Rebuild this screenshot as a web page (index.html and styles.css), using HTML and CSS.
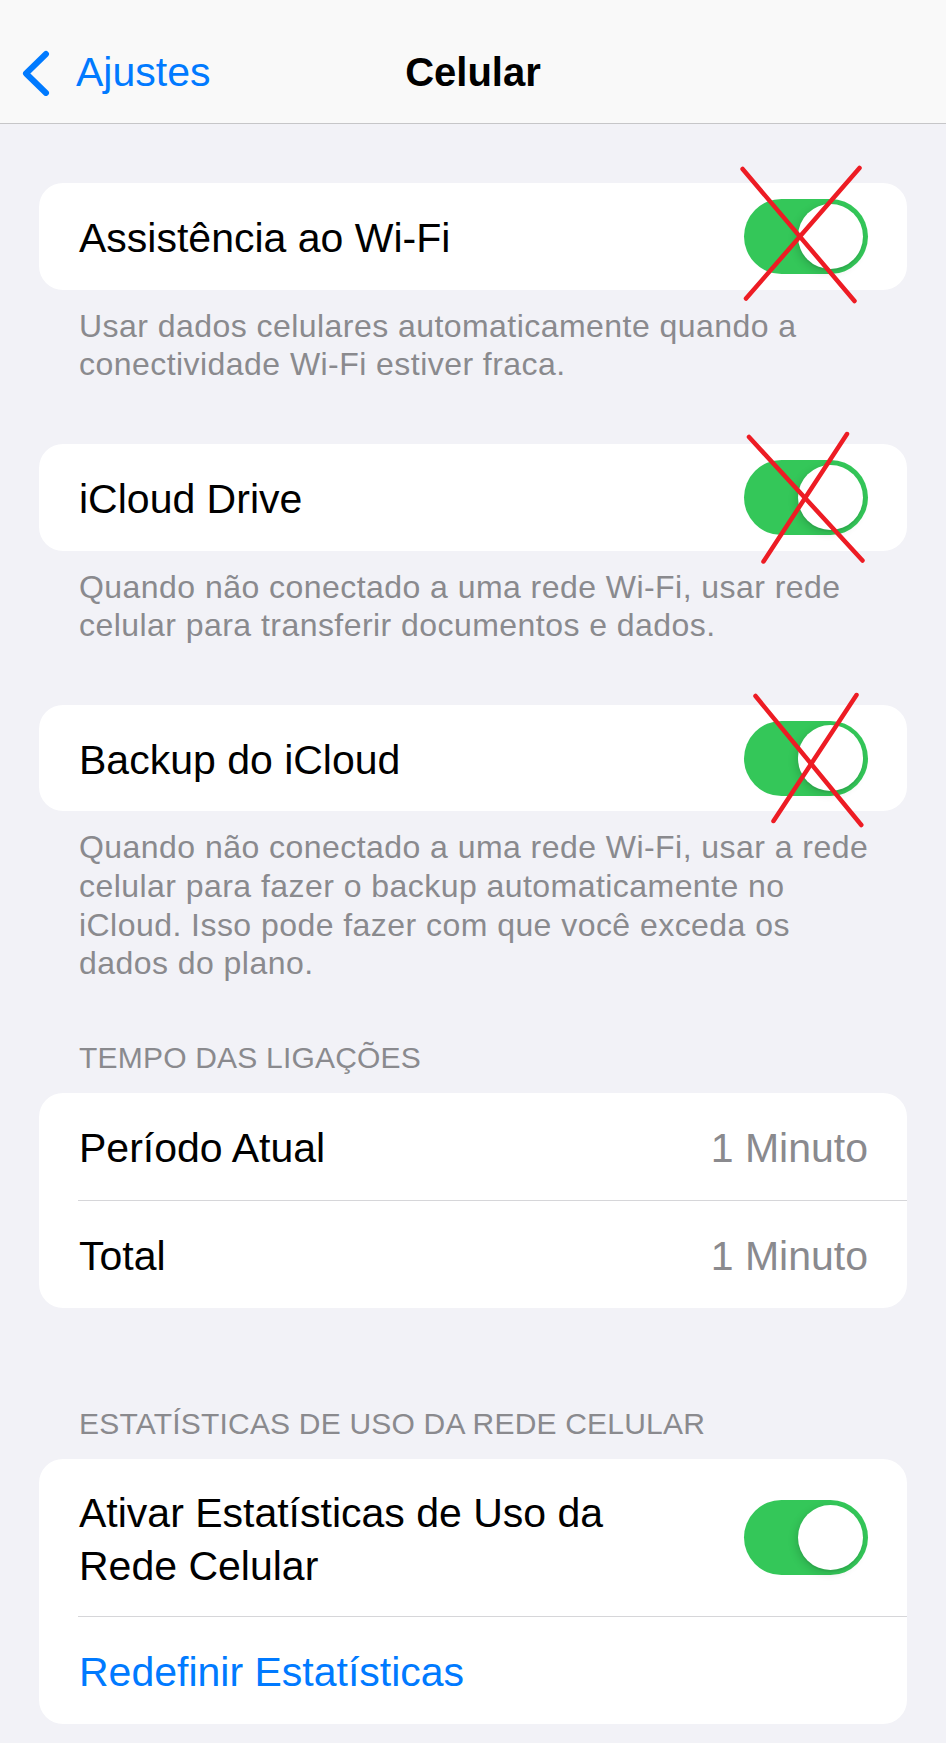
FILE: index.html
```html
<!DOCTYPE html>
<html lang="pt-BR">
<head>
<meta charset="utf-8">
<title>Celular</title>
<link rel="stylesheet" href="styles.css">
</head>
<body>
<header class="nav">
  <a class="back" href="#">
    <svg class="chev" width="30" height="46" viewBox="0 0 30 46"><polyline points="26,4 6,23.5 26,43" fill="none" stroke="#007aff" stroke-width="6" stroke-linecap="round" stroke-linejoin="round"/></svg>
    <span class="back-text">Ajustes</span>
  </a>
  <h1 class="title">Celular</h1>
  <div class="nav-right"></div>
</header>

<main class="content">
  <section class="group g1">
    <div class="card">
      <div class="row"><span class="label">Assistência ao Wi-Fi</span><span class="switch"><span class="knob"></span></span></div>
    </div>
    <p class="footnote">Usar dados celulares automaticamente quando a<br>conectividade Wi-Fi estiver fraca.</p>
  </section>

  <section class="group g2">
    <div class="card">
      <div class="row"><span class="label">iCloud Drive</span><span class="switch"><span class="knob"></span></span></div>
    </div>
    <p class="footnote">Quando não conectado a uma rede Wi-Fi, usar rede<br>celular para transferir documentos e dados.</p>
  </section>

  <section class="group g3">
    <div class="card">
      <div class="row"><span class="label">Backup do iCloud</span><span class="switch"><span class="knob"></span></span></div>
    </div>
    <p class="footnote">Quando não conectado a uma rede Wi-Fi, usar a rede<br>celular para fazer o backup automaticamente no<br>iCloud. Isso pode fazer com que você exceda os<br>dados do plano.</p>
  </section>

  <section class="group g4">
    <h2 class="header">TEMPO DAS LIGAÇÕES</h2>
    <div class="card">
      <div class="row"><span class="label">Período Atual</span><span class="value">1 Minuto</span></div>
      <div class="sep"></div>
      <div class="row"><span class="label">Total</span><span class="value">1 Minuto</span></div>
    </div>
  </section>

  <section class="group g5">
    <h2 class="header">ESTATÍSTICAS DE USO DA REDE CELULAR</h2>
    <div class="card">
      <div class="row tall"><span class="label multi">Ativar Estatísticas de Uso da Rede Celular</span><span class="switch"><span class="knob"></span></span></div>
      <div class="sep"></div>
      <div class="row"><span class="label link">Redefinir Estatísticas</span></div>
    </div>
  </section>
</main>

<svg class="marks" width="946" height="1743" viewBox="0 0 946 1743">
  <g stroke="#ed1c24" stroke-width="4.5" stroke-linecap="round" fill="none">
    <line x1="742.6" y1="169" x2="854.5" y2="301"/>
    <line x1="859.5" y1="168" x2="746" y2="298.5"/>
    <line x1="749" y1="437" x2="862.5" y2="560.5"/>
    <line x1="847" y1="434" x2="763.5" y2="561.5"/>
    <line x1="755.5" y1="696" x2="861.3" y2="825"/>
    <line x1="856.5" y1="695" x2="773.5" y2="821"/>
  </g>
</svg>
</body>
</html>
```

FILE: styles.css
```css
html, body {
  margin: 0;
  padding: 0;
}

body {
  position: relative;
  width: 946px;
  min-height: 1743px;
  background: #f2f2f7;
  font-family: "Liberation Sans", Arial, sans-serif;
  color: #000;
}

.nav {
  box-sizing: content-box;
  height: 77px;
  padding-top: 46px;
  border-bottom: 1px solid #c6c6c8;
  background: #f9f9f9;
  display: grid;
  grid-template-columns: 1fr auto 1fr;
  align-items: start;
}

.back {
  display: flex;
  align-items: center;
  height: 53px;
  padding-left: 20px;
  gap: 26px;
  text-decoration: none;
  color: #007aff;
  font-size: 41px;
  line-height: 53px;
}

.chev {
  display: block;
  flex: none;
}

.title {
  margin: 0;
  font-size: 40px;
  line-height: 53px;
  font-weight: bold;
  text-align: center;
}

.content {
  padding: 0 39px;
}

.group {
  margin: 0;
}

.g1 { padding-top: 59px; }
.g2 { padding-top: 60px; }
.g3 { padding-top: 60px; }
.g4 { padding-top: 57.4px; }
.g5 { padding-top: 98.6px; }

.card {
  background: #fff;
  border-radius: 24px;
  overflow: hidden;
}

.row {
  display: flex;
  align-items: center;
  justify-content: space-between;
  min-height: 106.7px;
  box-sizing: border-box;
  padding: 4px 39px 0 40px;
}

.row.tall {
  padding-top: 27.5px;
  padding-bottom: 23.5px;
}

.row .switch {
  margin-top: -4px;
}

.row.tall .switch {
  margin-top: -4px;
}

.label {
  font-size: 41px;
  line-height: 53px;
}

.label.multi {
  flex: 1;
  margin-right: 60px;
}

.link {
  color: #007aff;
}

.value {
  font-size: 41px;
  line-height: 53px;
  color: #8a8a8e;
}

.sep {
  height: 1px;
  margin-left: 39px;
  background: #d6d6d9;
}

.footnote {
  margin: 0;
  padding: 17px 10px 0 40px;
  font-size: 32px;
  letter-spacing: 0.45px;
  line-height: 38.6px;
  color: #8a8a8e;
  white-space: nowrap;
}

.header {
  margin: 0 0 17px;
  padding-left: 40px;
  font-size: 30px;
  letter-spacing: 0.2px;
  line-height: 36px;
  font-weight: normal;
  color: #8a8a8e;
}

.switch {
  position: relative;
  flex: none;
  width: 124px;
  height: 75px;
  border-radius: 37.5px;
  background: #34c759;
}

.knob {
  position: absolute;
  top: 4.8px;
  right: 4.8px;
  width: 65.4px;
  height: 65.4px;
  border-radius: 50%;
  background: #fff;
  box-shadow: -2px 3px 8px rgba(0, 0, 0, 0.15), 0 2px 1px rgba(0, 0, 0, 0.06);
}

.marks {
  position: absolute;
  left: 0;
  top: 0;
  pointer-events: none;
}
```
